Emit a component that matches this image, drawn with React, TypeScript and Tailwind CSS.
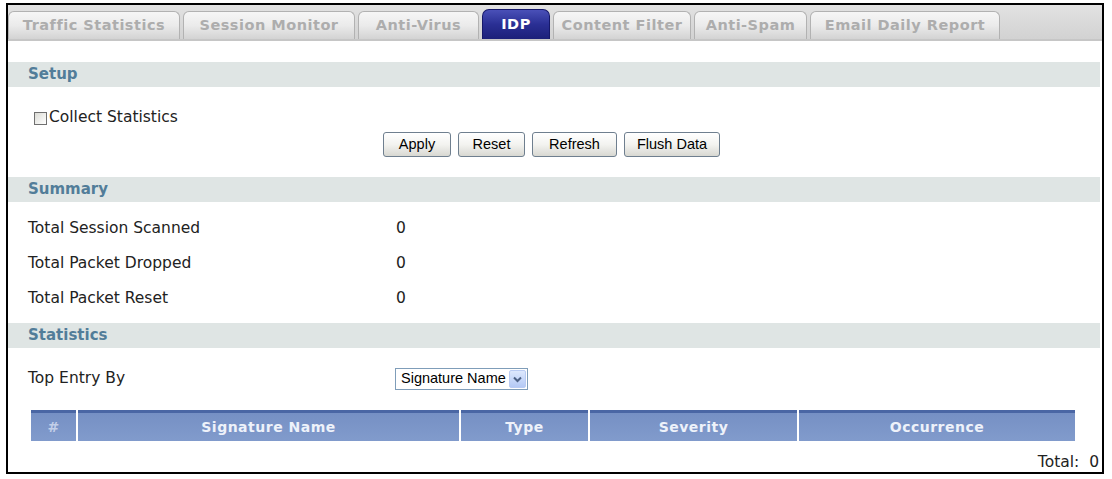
import React from "react";

const tabs = [
  { label: "Traffic Statistics", w: "w-[172px]" },
  { label: "Session Monitor", w: "w-[172px]" },
  { label: "Anti-Virus", w: "w-[121px]" },
  { label: "IDP", w: "w-[68px]", active: true },
  { label: "Content Filter", w: "w-[138px]" },
  { label: "Anti-Spam", w: "w-[113px]" },
  { label: "Email Daily Report", w: "w-[190px]" },
];

const summary = [
  { label: "Total Session Scanned", value: "0" },
  { label: "Total Packet Dropped", value: "0" },
  { label: "Total Packet Reset", value: "0" },
];

const columns = [
  { label: "#", w: "w-[45px]", dim: true },
  { label: "Signature Name", w: "w-[381px]" },
  { label: "Type", w: "w-[127px]" },
  { label: "Severity", w: "w-[207px]" },
  { label: "Occurrence", w: "w-[276px]" },
];

function SectionHeader({ title }: { title: string }) {
  return (
    <div className="mr-[2px] flex h-[25px] items-center bg-[#dfe5e4] pl-[20px] text-[15px] font-bold text-[#527d99]">
      {title}
    </div>
  );
}

function XpButton({ label, w }: { label: string; w: string }) {
  return (
    <button
      className={`${w} h-[25px] rounded-[3px] border border-[#6f7f8f] bg-gradient-to-b from-[#ffffff] via-[#f3f3f0] to-[#d8d8d2] font-['Liberation_Sans',Arial,sans-serif] text-[14.5px] text-black`}
    >
      {label}
    </button>
  );
}

export default function App() {
  return (
    <div className="h-[479px] w-[1112px] bg-white pl-[6px] pt-[3px] font-['DejaVu_Sans',Verdana,sans-serif] text-[15.5px] text-[#333]">
      <div className="flex h-[471px] w-[1098px] flex-col border-2 border-black">
        {/* Tabs */}
        <div className="flex h-[36px] items-end gap-[3px] border-b-2 border-[#c6c6c6] bg-gradient-to-b from-[#e2e2e2] to-[#d2d2d2]">
          {tabs.map((tab) =>
            tab.active ? (
              <div
                key={tab.label}
                className={`${tab.w} flex h-[30px] items-center justify-center rounded-t-[7px] border border-b-0 border-[#15186a] bg-gradient-to-b from-[#4a50b8] via-[#2a2f94] to-[#1c2079] text-[14.5px] font-bold tracking-[0.5px] text-white`}
              >
                {tab.label}
              </div>
            ) : (
              <div
                key={tab.label}
                className={`${tab.w} flex h-[28px] items-center justify-center rounded-t-[6px] border border-b-0 border-[#b2b2b2] bg-gradient-to-b from-[#f6f6f6] via-[#ebebeb] to-[#d3d3d3] text-[14.5px] font-bold tracking-[0.5px] text-[#adadad]`}
              >
                {tab.label}
              </div>
            )
          )}
        </div>

        {/* Setup */}
        <div className="mt-[21px]">
          <SectionHeader title="Setup" />
          <div className="h-[90px] pt-[24px]">
            <div className="flex h-[14px] items-center gap-[2px] pl-[26px]">
              <div className="h-[13px] w-[13px] shrink-0 border border-[#707070] bg-gradient-to-br from-[#dcdcd6] to-[#ffffff]" />
              <span className="text-[#222]">Collect Statistics</span>
            </div>
            <div className="mt-[7px] flex gap-[7px] pl-[375px]">
              <XpButton label="Apply" w="w-[68px]" />
              <XpButton label="Reset" w="w-[67px]" />
              <XpButton label="Refresh" w="w-[85px]" />
              <XpButton label="Flush Data" w="w-[96px]" />
            </div>
          </div>
        </div>

        {/* Summary */}
        <SectionHeader title="Summary" />
        <div className="h-[121px] pt-[9px]">
          {summary.map((row) => (
            <div key={row.label} className="flex h-[35px] items-center pl-[20px] text-[#222]">
              <span className="w-[368px]">{row.label}</span>
              <span>{row.value}</span>
            </div>
          ))}
        </div>

        {/* Statistics */}
        <SectionHeader title="Statistics" />
        <div className="flex h-[42px] items-end pl-[20px] text-[#222]">
          <div className="flex h-[22px] items-center">
            <span className="w-[367px]">Top Entry By</span>
            <div className="flex h-[22px] w-[133px] items-center justify-between whitespace-nowrap border border-[#7f9db9] bg-white pl-[5px] pr-[1px] font-['Liberation_Sans',Arial,sans-serif] text-[14.5px] text-black">
              <span>Signature Name</span>
              <span className="flex h-[18px] w-[17px] items-center justify-center rounded-[2px] border border-[#b9cbf3] bg-gradient-to-b from-[#dde8fd] to-[#b4c9f5]">
                <svg width="9" height="7" viewBox="0 0 9 7">
                  <path d="M1 1.5 L4.5 5 L8 1.5" fill="none" stroke="#4d6185" strokeWidth="2" />
                </svg>
              </span>
            </div>
          </div>
        </div>
        <div className="mt-[20px] flex gap-[2px] pl-[23px]">
          {columns.map((col) => (
            <div
              key={col.label}
              className={`${col.w} flex h-[31px] items-center justify-center border-t-[3px] border-[#4a66a4] bg-gradient-to-b from-[#7690c4] to-[#819bcc] text-[14px] font-bold tracking-[0.5px] ${col.dim ? "text-[#c3cfe8]" : "text-[#eef2fa]"}`}
            >
              {col.label}
            </div>
          ))}
        </div>
        <div className="flex flex-1 justify-end pr-[3px] pt-[12px] leading-[18px] text-[#222]">
          Total:&nbsp; 0
        </div>
      </div>
    </div>
  );
}
